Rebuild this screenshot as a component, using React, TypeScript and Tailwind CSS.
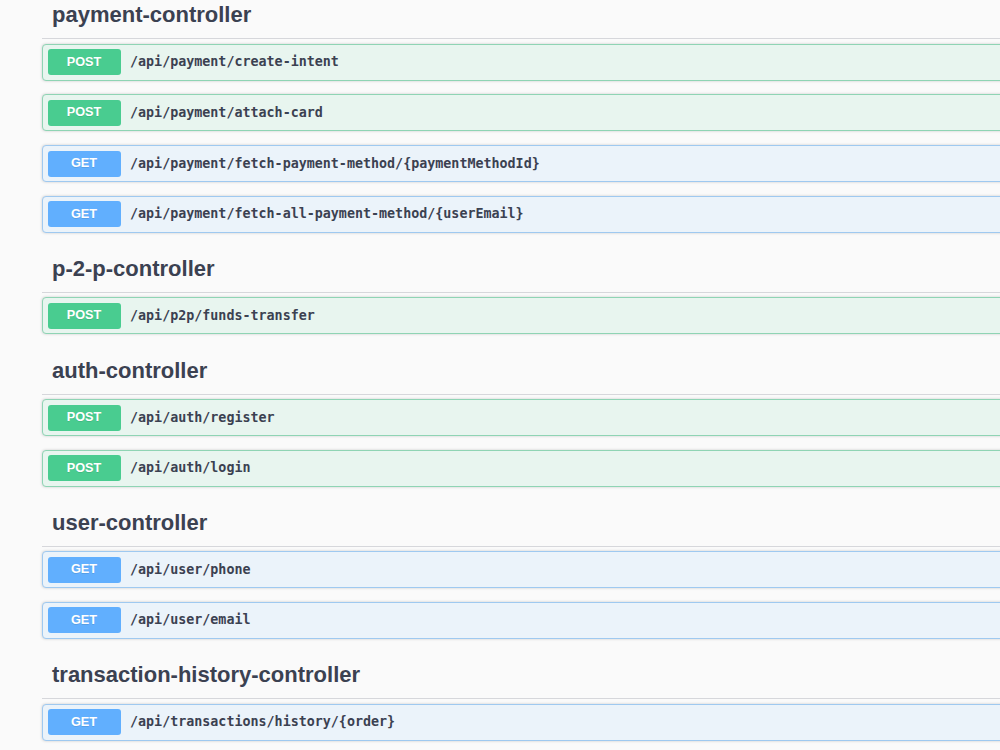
import React from "react"

type Method = "GET" | "POST"

type Endpoint = {
  method: Method
  path: string
}

type Tag = {
  name: string
  endpoints: Endpoint[]
}

const tags: Tag[] = [
  {
    name: "payment-controller",
    endpoints: [
      { method: "POST", path: "/api/payment/create-intent" },
      { method: "POST", path: "/api/payment/attach-card" },
      { method: "GET", path: "/api/payment/fetch-payment-method/{paymentMethodId}" },
      { method: "GET", path: "/api/payment/fetch-all-payment-method/{userEmail}" },
    ],
  },
  {
    name: "p-2-p-controller",
    endpoints: [{ method: "POST", path: "/api/p2p/funds-transfer" }],
  },
  {
    name: "auth-controller",
    endpoints: [
      { method: "POST", path: "/api/auth/register" },
      { method: "POST", path: "/api/auth/login" },
    ],
  },
  {
    name: "user-controller",
    endpoints: [
      { method: "GET", path: "/api/user/phone" },
      { method: "GET", path: "/api/user/email" },
    ],
  },
  {
    name: "transaction-history-controller",
    endpoints: [{ method: "GET", path: "/api/transactions/history/{order}" }],
  },
]

const Operation = ({ method, path }: Endpoint) => {
  const isPost = method === "POST"
  return (
    <div
      className={
        isPost
          ? "mb-[13.7px] flex h-[37px] w-[1000px] items-center rounded border border-[#8fd4b4] bg-[#e8f5ef] px-[4.5px] shadow-[0_0_3px_rgba(0,0,0,0.19)]"
          : "mb-[13.7px] flex h-[37px] w-[1000px] items-center rounded border border-[#9fc9f0] bg-[#ebf3fa] px-[4.5px] shadow-[0_0_3px_rgba(0,0,0,0.19)]"
      }
    >
      <span
        className={
          isPost
            ? "flex h-[26px] w-[73px] shrink-0 items-center justify-center rounded-[3px] bg-[#49cc90] text-[12.7px] font-bold text-white [text-shadow:0_1px_0_rgba(0,0,0,0.1)]"
            : "flex h-[26px] w-[73px] shrink-0 items-center justify-center rounded-[3px] bg-[#61affe] text-[12.7px] font-bold text-white [text-shadow:0_1px_0_rgba(0,0,0,0.1)]"
        }
        style={{ fontFamily: '"Liberation Sans", Arial, sans-serif' }}
      >
        {method}
      </span>
      <span
        className="pl-[9.5px] text-[13.35px] font-semibold text-[#3b4151]"
        style={{ fontFamily: '"DejaVu Sans Mono", "Liberation Mono", monospace' }}
      >
        {path}
      </span>
    </div>
  )
}

const App = () => {
  return (
    <div className="h-[750px] w-full overflow-hidden bg-[#fafafa]">
      <div className="-mt-[7.1px] pl-[42px]">
        {tags.map((tag) => (
          <section key={tag.name}>
            <h3
              className="mb-[4.5px] w-[1000px] border-b border-[#d6d7db] pb-[9px] pl-[10px] pt-[8.4px] text-[22px] font-bold leading-[28px] text-[#3b4151]"
              style={{ fontFamily: '"Liberation Sans", Arial, sans-serif' }}
            >
              {tag.name}
            </h3>
            {tag.endpoints.map((ep) => (
              <Operation key={ep.path} method={ep.method} path={ep.path} />
            ))}
          </section>
        ))}
      </div>
    </div>
  )
}

export default App
